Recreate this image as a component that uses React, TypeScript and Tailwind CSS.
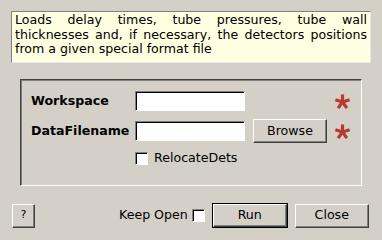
import React from "react";

const raised =
  "border border-t-white border-l-white border-b-[#404040] border-r-[#404040] shadow-[inset_-1px_-1px_0_#808080] bg-[#d4d0c8]";
const sunken =
  "border border-t-[#808080] border-l-[#808080] border-b-white border-r-white shadow-[inset_1px_1px_0_#000] bg-white";

function Star() {
  const arms = [-90, -18, 54, 126, 198];
  return (
    <svg width="17" height="17" viewBox="0 0 17 17">
      {arms.map((a) => {
        const r = (a * Math.PI) / 180;
        return (
          <line
            key={a}
            x1="8.5"
            y1="9"
            x2={8.5 + 7.5 * Math.cos(r)}
            y2={9 + 7.5 * Math.sin(r)}
            stroke="#b83a2c"
            strokeWidth="3.2"
          />
        );
      })}
    </svg>
  );
}

function Check() {
  return <div className={`${sunken} w-[13px] h-[13px]`} />;
}

export default function App() {
  return (
    <div
      className="w-[382px] h-[240px] bg-[#d4d0c8] text-[12.6px] text-black px-[11px] pt-[11px]"
      style={{ fontFamily: '"DejaVu Sans", sans-serif' }}
    >
      <div className="w-[360px] h-[52px] bg-[#ffffe1] border border-t-[#808080] border-l-[#808080] border-b-[#e8e8e8] border-r-[#e8e8e8] px-[3px] pt-[1px] leading-[14.5px] text-justify">
        Loads delay times, tube pressures, tube wall thicknesses and, if
        necessary, the detectors positions from a given special format file
      </div>

      <div className="ml-[9px] mt-[16px] w-[342px] h-[107px] border border-t-[#404040] border-l-[#404040] border-b-white border-r-white shadow-[inset_1px_1px_0_#808080] pl-[10px] pt-[9px] flex flex-col gap-[6px]">
        <div className="flex items-center h-[24px]">
          <span className="w-[104px] font-bold">Workspace</span>
          <div className={`${sunken} w-[110px] h-[20px]`} />
          <div className="ml-[89px]">
            <Star />
          </div>
        </div>
        <div className="flex items-center h-[24px]">
          <span className="w-[104px] font-bold">DataFilename</span>
          <div className={`${sunken} w-[110px] h-[20px]`} />
          <button className={`${raised} ml-[8px] w-[74px] h-[24px]`}>
            Browse
          </button>
          <div className="ml-[7px]">
            <Star />
          </div>
        </div>
        <div className="flex items-center h-[18px] pl-[104px] gap-[6px]">
          <Check />
          <span>RelocateDets</span>
        </div>
      </div>

      <div className="mt-[17px] flex items-center h-[25px]">
        <button className={`${raised} ml-[1px] w-[23px] h-[24px] text-[11px]`}>
          ?
        </button>
        <span className="ml-[84px]">Keep Open</span>
        <div className="ml-[4px]">
          <Check />
        </div>
        <button className="ml-[7px] w-[76px] h-[25px] border border-black">
          <div className={`${raised} w-full h-full flex items-center justify-center`}>
            Run
          </div>
        </button>
        <button className={`${raised} ml-[7px] w-[74px] h-[24px]`}>
          Close
        </button>
      </div>
    </div>
  );
}
